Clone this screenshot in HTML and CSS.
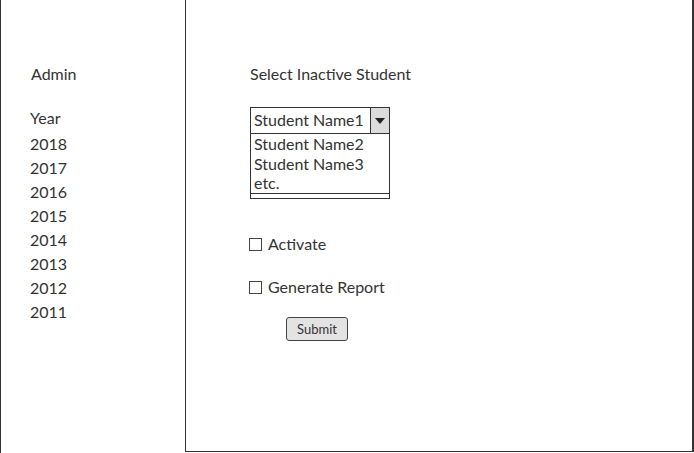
FILE: index.html
```html
<!DOCTYPE html>
<html>
<head>
<meta charset="utf-8">
<link rel="stylesheet" href="styles.css">
</head>
<body>
<div class="frame">
  <aside class="sidebar">
    <div class="admin">Admin</div>
    <div class="year-title">Year</div>
    <ul class="years">
      <li>2018</li><li>2017</li><li>2016</li><li>2015</li>
      <li>2014</li><li>2013</li><li>2012</li><li>2011</li>
    </ul>
  </aside>
  <main class="panel">
    <div class="label">Select Inactive Student</div>
    <div class="dropdown">
      <div class="dd-head">
        <span class="dd-value">Student Name1</span>
        <span class="dd-btn"><svg width="10" height="6" viewBox="0 0 10 6"><path d="M0 0H10L5 6Z" fill="#222"/></svg></span>
      </div>
      <div class="dd-list">
        <div>Student Name2</div>
        <div>Student Name3</div>
        <div>etc.</div>
      </div>
      <div class="dd-foot"></div>
    </div>
    <label class="check first"><span class="box"></span>Activate</label>
    <label class="check"><span class="box"></span>Generate Report</label>
    <button class="submit">Submit</button>
  </main>
</div>
</body>
</html>
```
FILE: styles.css
```css
* { box-sizing: border-box; }
html, body { margin: 0; padding: 0; background: #fff; }
body { font-family: Lato, "Open Sans", sans-serif; color: #333; width: 694px; height: 453px; overflow: hidden; }
.frame { display: flex; height: 453px; }
.sidebar { width: 185px; border-left: 1px solid #333; padding: 64px 0 0 29px; font-size: 16px; }
.admin { line-height: 20px; margin-left: 1px; }
.year-title { margin-top: 24px; line-height: 20px; }
.years { list-style: none; margin: 4px 0 0; padding: 0; }
.years li { line-height: 24px; height: 24px; }
.panel { width: 509px; height: 452px; border-left: 1px solid #333; border-right: 2px solid #333; border-bottom: 1px solid #333; padding: 64px 0 0 64px; font-size: 16px; }
.label { line-height: 20px; }
.dropdown { margin-top: 23px; width: 140px; border: 1px solid #333; }
.dd-head { display: flex; height: 26px; border-bottom: 1px solid #333; }
.dd-value { flex: 1; padding-left: 3px; line-height: 24px; }
.dd-btn { width: 19px; background: #dcdcdc; border-left: 1px solid #333; display: flex; align-items: center; justify-content: center; }
.dd-list { padding: 0 0 0 3px; line-height: 19.5px; height: 60px; border-bottom: 1px solid #333; }
.dd-foot { height: 4px; }
.check { display: flex; align-items: center; margin-left: -1px; line-height: 20px; }
.check.first { margin-top: 35px; }
.check + .check { margin-top: 23px; }
.box { width: 13px; height: 13px; border: 1px solid #444; margin-right: 6px; background: #fff; }
.submit { display: block; margin: 20px 0 0 36px; width: 62px; height: 24px; font-family: Lato, sans-serif; font-size: 13px; color: #333; background: #e3e3e3; border: 1px solid #444; border-radius: 3px; padding: 0; }
```
